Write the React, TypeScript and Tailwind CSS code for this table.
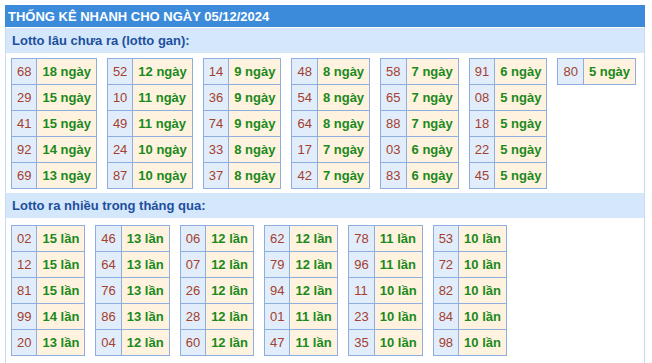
import React from 'react';

type Cell = [string, string];

const ganTables: Cell[][] = [
  [['68', '18 ngày'], ['29', '15 ngày'], ['41', '15 ngày'], ['92', '14 ngày'], ['69', '13 ngày']],
  [['52', '12 ngày'], ['10', '11 ngày'], ['49', '11 ngày'], ['24', '10 ngày'], ['87', '10 ngày']],
  [['14', '9 ngày'], ['36', '9 ngày'], ['74', '9 ngày'], ['33', '8 ngày'], ['37', '8 ngày']],
  [['48', '8 ngày'], ['54', '8 ngày'], ['64', '8 ngày'], ['17', '7 ngày'], ['42', '7 ngày']],
  [['58', '7 ngày'], ['65', '7 ngày'], ['88', '7 ngày'], ['03', '6 ngày'], ['83', '6 ngày']],
  [['91', '6 ngày'], ['08', '5 ngày'], ['18', '5 ngày'], ['22', '5 ngày'], ['45', '5 ngày']],
  [['80', '5 ngày']],
];

const nhieuTables: Cell[][] = [
  [['02', '15 lần'], ['12', '15 lần'], ['81', '15 lần'], ['99', '14 lần'], ['20', '13 lần']],
  [['46', '13 lần'], ['64', '13 lần'], ['76', '13 lần'], ['86', '13 lần'], ['04', '12 lần']],
  [['06', '12 lần'], ['07', '12 lần'], ['26', '12 lần'], ['28', '12 lần'], ['60', '12 lần']],
  [['62', '12 lần'], ['79', '12 lần'], ['94', '12 lần'], ['01', '11 lần'], ['47', '11 lần']],
  [['78', '11 lần'], ['96', '11 lần'], ['11', '10 lần'], ['23', '10 lần'], ['35', '10 lần']],
  [['53', '10 lần'], ['72', '10 lần'], ['82', '10 lần'], ['84', '10 lần'], ['98', '10 lần']],
];

const LotoTable = ({ rows }: { rows: Cell[] }) => (
  <table className="shrink-0 border-collapse border border-[#8eaee0]">
    <tbody>
      {rows.map(([num, val]) => (
        <tr key={num} className="h-[26px]">
          <td className="whitespace-nowrap border border-[#8eaee0] bg-[#e2edfb] px-[5px] py-0 text-[#a3402e]">{num}</td>
          <td className="whitespace-nowrap border border-[#8eaee0] bg-[#fff3e0] px-[5px] py-0 font-bold text-[#1b891b]">{val}</td>
        </tr>
      ))}
    </tbody>
  </table>
);

export default function App() {
  return (
    <div className="min-h-screen bg-white pt-[5px] pl-[5px] font-['Liberation_Sans',Arial,sans-serif] text-[13px] leading-none">
      <div className="w-[640px] border-x border-[#c7dbf0] min-h-[358px]">
        {/* Header */}
        <div className="-mx-px flex h-[22px] items-center bg-[#3c8bdb] px-[3px] font-bold text-white">
          THỐNG KÊ NHANH CHO NGÀY 05/12/2024
        </div>

        {/* Lotto gan */}
        <div className="mt-px flex h-[25px] items-center bg-[#d4e7fb] px-[6px] font-bold text-[#1d4f9e]">
          Lotto lâu chưa ra (lotto gan):
        </div>
        <div className="flex items-start gap-[10px] px-[5px] pt-[5px]">
          {ganTables.map((t, i) => (
            <LotoTable key={i} rows={t} />
          ))}
        </div>

        {/* Lotto ra nhieu */}
        <div className="mt-[4px] flex h-[25px] items-center bg-[#d4e7fb] px-[6px] font-bold text-[#1d4f9e]">
          Lotto ra nhiều trong tháng qua:
        </div>
        <div className="flex items-start gap-[10px] px-[5px] pt-[7px]">
          {nhieuTables.map((t, i) => (
            <LotoTable key={i} rows={t} />
          ))}
        </div>
      </div>
    </div>
  );
}
